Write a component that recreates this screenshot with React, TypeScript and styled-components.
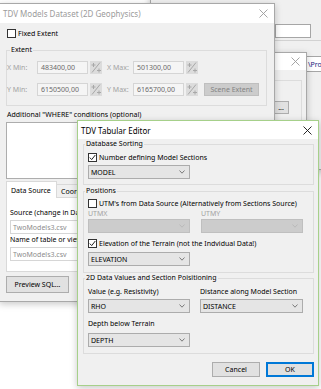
import React from 'react';
import styled, { createGlobalStyle } from 'styled-components';

const GlobalStyle = createGlobalStyle`
  html, body { margin: 0; padding: 0; background: #fff; }
  body {
    font-family: 'Noto Sans', 'Open Sans', sans-serif;
    font-size: 7px;
    color: #000;
  }
  * { box-sizing: border-box; }
`;

const Desktop = styled.div`
  position: relative;
  width: 321px;
  height: 389px;
  overflow: hidden;
  background: #fff;
`;

// windows sit on a free canvas, so they are placed by coordinates
const Window = styled.div<{ $left: number; $top: number; $width: number; $height: number; $active?: boolean }>`
  position: absolute;
  z-index: 0;
  left: ${p => p.$left}px;
  top: ${p => p.$top}px;
  width: ${p => p.$width}px;
  height: ${p => p.$height}px;
  display: flex;
  flex-direction: column;
  background: #f0f0f0;
  border: 1px solid ${p => (p.$active ? '#a6d08a' : '#a8a8a8')};
  box-shadow: 0 2px 7px rgba(0, 0, 0, 0.22);
`;

const TitleBar = styled.div<{ $h: number }>`
  flex: none;
  height: ${p => p.$h}px;
  background: #fff;
  display: flex;
  align-items: center;
  justify-content: space-between;
  padding: 0 6px 0 3px;
`;

const Title = styled.span<{ $active?: boolean }>`
  font-size: 8px;
  white-space: nowrap;
  color: ${p => (p.$active ? '#000' : '#9b9b9b')};
`;

const Body = styled.div`
  flex: 1;
  display: flex;
  flex-direction: column;
  align-items: flex-start;
  min-height: 0;
`;

const Group = styled.fieldset<{ $m: string; $pad?: number; $pt?: number; $pb?: number }>`
  align-self: stretch;
  margin: ${p => p.$m};
  padding: ${p => p.$pt ?? 0}px ${p => p.$pad ?? 4}px ${p => p.$pb ?? 6}px ${p => p.$pad ?? 4}px;
  border: 1px solid #dcdcdc;
  min-width: 0;
  display: flex;
  flex-direction: column;
  align-items: flex-start;
`;

const Legend = styled.legend<{ $ml: number }>`
  padding: 0 1px;
  margin-left: ${p => p.$ml}px;
  line-height: 10px;
  white-space: nowrap;
`;

const CheckRow = styled.div<{ $m: string }>`
  display: flex;
  align-items: center;
  gap: 2px;
  height: 9px;
  margin: ${p => p.$m};
  white-space: nowrap;
`;

const Box = styled.span`
  flex: none;
  width: 9px;
  height: 9px;
  border: 1px solid #333;
  background: #fff;
  display: flex;
  align-items: center;
  justify-content: center;
`;

const Text = styled.div<{ $m?: string; $muted?: boolean }>`
  margin: ${p => p.$m ?? '0'};
  line-height: 10px;
  white-space: nowrap;
  color: ${p => (p.$muted ? '#a3a3a3' : '#000')};
`;

const Combo = styled.div<{ $m?: string; $disabled?: boolean; $w?: number }>`
  flex: none;
  width: ${p => p.$w ?? 102}px;
  height: 14px;
  margin: ${p => p.$m ?? '0'};
  display: flex;
  align-items: center;
  justify-content: space-between;
  padding: 0 4px 0 2px;
  background: ${p => (p.$disabled ? '#cccccc' : '#e5e5e5')};
  border: 1px solid ${p => (p.$disabled ? '#bfbfbf' : '#acacac')};
  color: #000;
`;

const Pair = styled.div<{ $m?: string }>`
  display: grid;
  grid-template-columns: 102px 103px;
  column-gap: 10px;
  margin: ${p => p.$m ?? '0'};
`;

const Buttons = styled.div`
  align-self: stretch;
  display: flex;
  justify-content: flex-end;
  gap: 6px;
  margin-top: 8px;
  padding-right: 4px;
`;

const Button = styled.div<{ $w: number; $h?: number; $m?: string; $default?: boolean; $disabled?: boolean }>`
  flex: none;
  width: ${p => p.$w}px;
  height: ${p => p.$h ?? 15}px;
  margin: ${p => p.$m ?? '0'};
  display: flex;
  align-items: center;
  justify-content: center;
  white-space: nowrap;
  background: ${p => (p.$disabled ? '#cccccc' : '#e1e1e1')};
  border: 1px solid ${p => (p.$default ? '#0078d7' : p.$disabled ? '#bfbfbf' : '#adadad')};
  box-shadow: ${p => (p.$default ? 'inset 0 0 0 1px #0078d7' : 'none')};
  color: ${p => (p.$disabled ? '#838383' : '#000')};
`;

const ExtentRow = styled.div<{ $m: string }>`
  display: flex;
  align-items: center;
  height: 13px;
  margin: ${p => p.$m};
`;

const FieldLabel = styled.span<{ $w: number; $ml?: number }>`
  width: ${p => p.$w}px;
  margin-left: ${p => p.$ml ?? 0}px;
  color: #a3a3a3;
  white-space: nowrap;
`;

const NumBox = styled.div`
  width: 51px;
  height: 13px;
  padding-left: 3px;
  display: flex;
  align-items: center;
  background: #f5f5f5;
  border: 1px solid #d5d5d5;
  color: #6a6a6a;
`;

const CalcIcon = styled.svg`
  flex: none;
  margin-left: 2px;
`;

const Input = styled.div<{ $m?: string; $w: number; $h?: number; $readonly?: boolean }>`
  flex: none;
  width: ${p => p.$w}px;
  height: ${p => p.$h ?? 14}px;
  margin: ${p => p.$m ?? '0'};
  padding-left: 2px;
  display: flex;
  align-items: center;
  overflow: hidden;
  white-space: nowrap;
  background: #fff;
  border: 1px solid ${p => (p.$readonly ? '#d6d6d6' : '#a6a6a6')};
  color: ${p => (p.$readonly ? '#8c8c8c' : '#1a237e')};
`;

const Memo = styled.div`
  align-self: stretch;
  height: 57px;
  margin: 2px 7px 0 6px;
  background: #fff;
  border: 1px solid #adadad;
`;

const TabStrip = styled.div`
  display: flex;
  align-items: flex-end;
  margin: 2px 0 -1px 6px;
  position: relative;
  z-index: 1;
`;

const Tab = styled.div<{ $selected?: boolean; $w: number }>`
  width: ${p => p.$w}px;
  height: ${p => (p.$selected ? 17 : 14)}px;
  margin-left: ${p => (p.$selected ? 0 : -1)}px;
  padding-left: 4px;
  display: flex;
  align-items: center;
  white-space: nowrap;
  overflow: hidden;
  background: ${p => (p.$selected ? '#fff' : '#f0f0f0')};
  border: 1px solid #d9d9d9;
  border-bottom: ${p => (p.$selected ? 'none' : '1px solid #d9d9d9')};
`;

const TabPanel = styled.div`
  align-self: stretch;
  height: 75px;
  margin: 0 7px 0 6px;
  padding: 10px 3px 0 3px;
  display: flex;
  flex-direction: column;
  align-items: flex-start;
  background: #fff;
  border: 1px solid #d9d9d9;
`;

const Rule = styled.div`
  align-self: stretch;
  height: 1px;
  margin-top: 2px;
  background: #d2d2d2;
`;

const ButtonRow = styled.div`
  align-self: stretch;
  display: flex;
  justify-content: flex-end;
  padding-right: 8px;
`;

const Close = ({ color }: { color: string }) => (
  <svg width="9" height="9" viewBox="0 0 9 9">
    <path d="M0.5 0.5 L8.5 8.5 M8.5 0.5 L0.5 8.5" stroke={color} strokeWidth="0.9" fill="none" />
  </svg>
);

const Chevron = ({ color = '#5f5f5f' }: { color?: string }) => (
  <svg width="6" height="4" viewBox="0 0 6 4">
    <polyline points="0.5,0.5 3,3.2 5.5,0.5" stroke={color} strokeWidth="0.8" fill="none" />
  </svg>
);

const Tick = () => (
  <svg width="7" height="7" viewBox="0 0 7 7">
    <polyline points="0.8,3.6 2.7,5.6 6.3,1" stroke="#222" strokeWidth="1" fill="none" />
  </svg>
);

const Calc = () => (
  <CalcIcon width="12" height="13" viewBox="0 0 12 13">
    <rect x="0" y="0" width="12" height="13" fill="#dcdcdc" />
    <path d="M1.5 4 H5.5 M3.5 2 V6 M2 11.5 L10 1.5 M7 9.5 H11 M9 7.5 V11.5" stroke="#a8a8a8" strokeWidth="1" fill="none" />
  </CalcIcon>
);

const Checkbox = ({ checked, label, m }: { checked?: boolean; label: string; m: string }) => (
  <CheckRow $m={m}>
    <Box>{checked && <Tick />}</Box>
    <span>{label}</span>
  </CheckRow>
);

const Select = ({ value, disabled, m, w }: { value?: string; disabled?: boolean; m?: string; w?: number }) => (
  <Combo $disabled={disabled} $m={m} $w={w}>
    <span>{value}</span>
    <Chevron color={disabled ? '#b5b5b5' : '#5f5f5f'} />
  </Combo>
);

export default function App() {
  return (
    <Desktop>
      <GlobalStyle />

      {/* far background window */}
      <Window $left={150} $top={-30} $width={200} $height={200}>
        <Body>
          <Input $w={36} $m="53px 0 0 124px" />
          <Rule />
          <Input $w={60} $h={16} $m="15px 0 0 154px">\Projects</Input>
        </Body>
      </Window>

      {/* middle window, mostly hidden */}
      <Window $left={190} $top={52} $width={117} $height={250}>
        <TitleBar $h={17}>
          <Title>TDV Section Source</Title>
          <Close color="#9b9b9b" />
        </TitleBar>
        <Body>
          <Group $m="10px 4px 0 5px" $pt={20} $pb={40}>
            <ButtonRow>
              <Button $w={16} $h={13}>...</Button>
            </ButtonRow>
          </Group>
        </Body>
      </Window>

      {/* TDV Models Dataset */}
      <Window $left={-1} $top={3} $width={276} $height={299}>
        <TitleBar $h={19}>
          <Title>TDV Models Dataset (2D Geophysics)</Title>
          <Close color="#9b9b9b" />
        </TitleBar>
        <Body>
          <Checkbox label="Fixed Extent" m="6px 0 0 7px" />
          <Group $m="7px 7px 0 6px" $pad={0} $pb={9}>
            <Legend $ml={3}>Extent</Legend>
            <ExtentRow $m="6px 0 0 0">
              <FieldLabel $w={30}>X Min:</FieldLabel>
              <NumBox>483400,00</NumBox>
              <Calc />
              <FieldLabel $w={26} $ml={5}>X Max:</FieldLabel>
              <NumBox>501300,00</NumBox>
              <Calc />
            </ExtentRow>
            <ExtentRow $m="9px 0 0 0">
              <FieldLabel $w={30}>Y Min:</FieldLabel>
              <NumBox>6150500,00</NumBox>
              <Calc />
              <FieldLabel $w={26} $ml={5}>Y Max:</FieldLabel>
              <NumBox>6165700,00</NumBox>
              <Calc />
              <Button $w={55} $h={13} $m="0 0 0 6px" $disabled>Scene Extent</Button>
            </ExtentRow>
          </Group>
          <Text $m="4px 0 0 7px">Additional "WHERE" conditions (optional)</Text>
          <Memo />
          <TabStrip>
            <Tab $selected $w={51}>Data Source</Tab>
            <Tab $w={50}>Coordinates</Tab>
          </TabStrip>
          <TabPanel>
            <Text>Source (change in Data Source)</Text>
            <Input $w={150} $m="2px 0 0 0" $readonly>TwoModels3.csv</Input>
            <Text $m="1px 0 0 0">Name of table or view</Text>
            <Input $w={150} $m="2px 0 0 0" $readonly>TwoModels3.csv</Input>
          </TabPanel>
          <Button $w={63} $h={17} $m="4px 0 0 6px">Preview SQL...</Button>
        </Body>
      </Window>

      {/* TDV Tabular Editor (active) */}
      <Window $left={77} $top={120} $width={242} $height={266} $active>
        <TitleBar $h={18}>
          <Title $active>TDV Tabular Editor</Title>
          <Close color="#111" />
        </TitleBar>
        <Body>
          <Group $m="0 4px 0 5px" $pb={5}>
            <Legend $ml={-3}>Database Sorting</Legend>
            <Checkbox checked label="Number defining Model Sections" m="4px 0 0 0" />
            <Select value="MODEL" m="3px 0 0 0" />
          </Group>
          <Group $m="1px 4px 0 5px">
            <Legend $ml={-3}>Positions</Legend>
            <Checkbox label="UTM's from Data Source (Alternatively from Sections Source)" m="3px 0 0 0" />
            <Pair $m="1px 0 0 0">
              <Text $muted>UTMX</Text>
              <Text $muted $m="0 0 0 1px">UTMY</Text>
              <Select disabled />
              <Select disabled w={102} m="0 0 0 1px" />
            </Pair>
            <Checkbox checked label="Elevation of the Terrain (not the Indvidual Data!)" m="6px 0 0 0" />
            <Select value="ELEVATION" m="4px 0 0 0" />
          </Group>
          <Group $m="0 4px 0 5px">
            <Legend $ml={-3}>2D Data Values and Section Poisitioning</Legend>
            <Pair $m="4px 0 0 0">
              <Text>Value (e.g. Resistivity)</Text>
              <Text>Distance along Model Section</Text>
              <Select value="RHO" m="2px 0 0 0" />
              <Select value="DISTANCE" w={103} m="2px 0 0 0" />
            </Pair>
            <Text $m="6px 0 0 0">Depth below Terrain</Text>
            <Select value="DEPTH" m="4px 0 0 0" />
          </Group>
          <Buttons>
            <Button $w={48}>Cancel</Button>
            <Button $w={48} $default>OK</Button>
          </Buttons>
        </Body>
      </Window>
    </Desktop>
  );
}
